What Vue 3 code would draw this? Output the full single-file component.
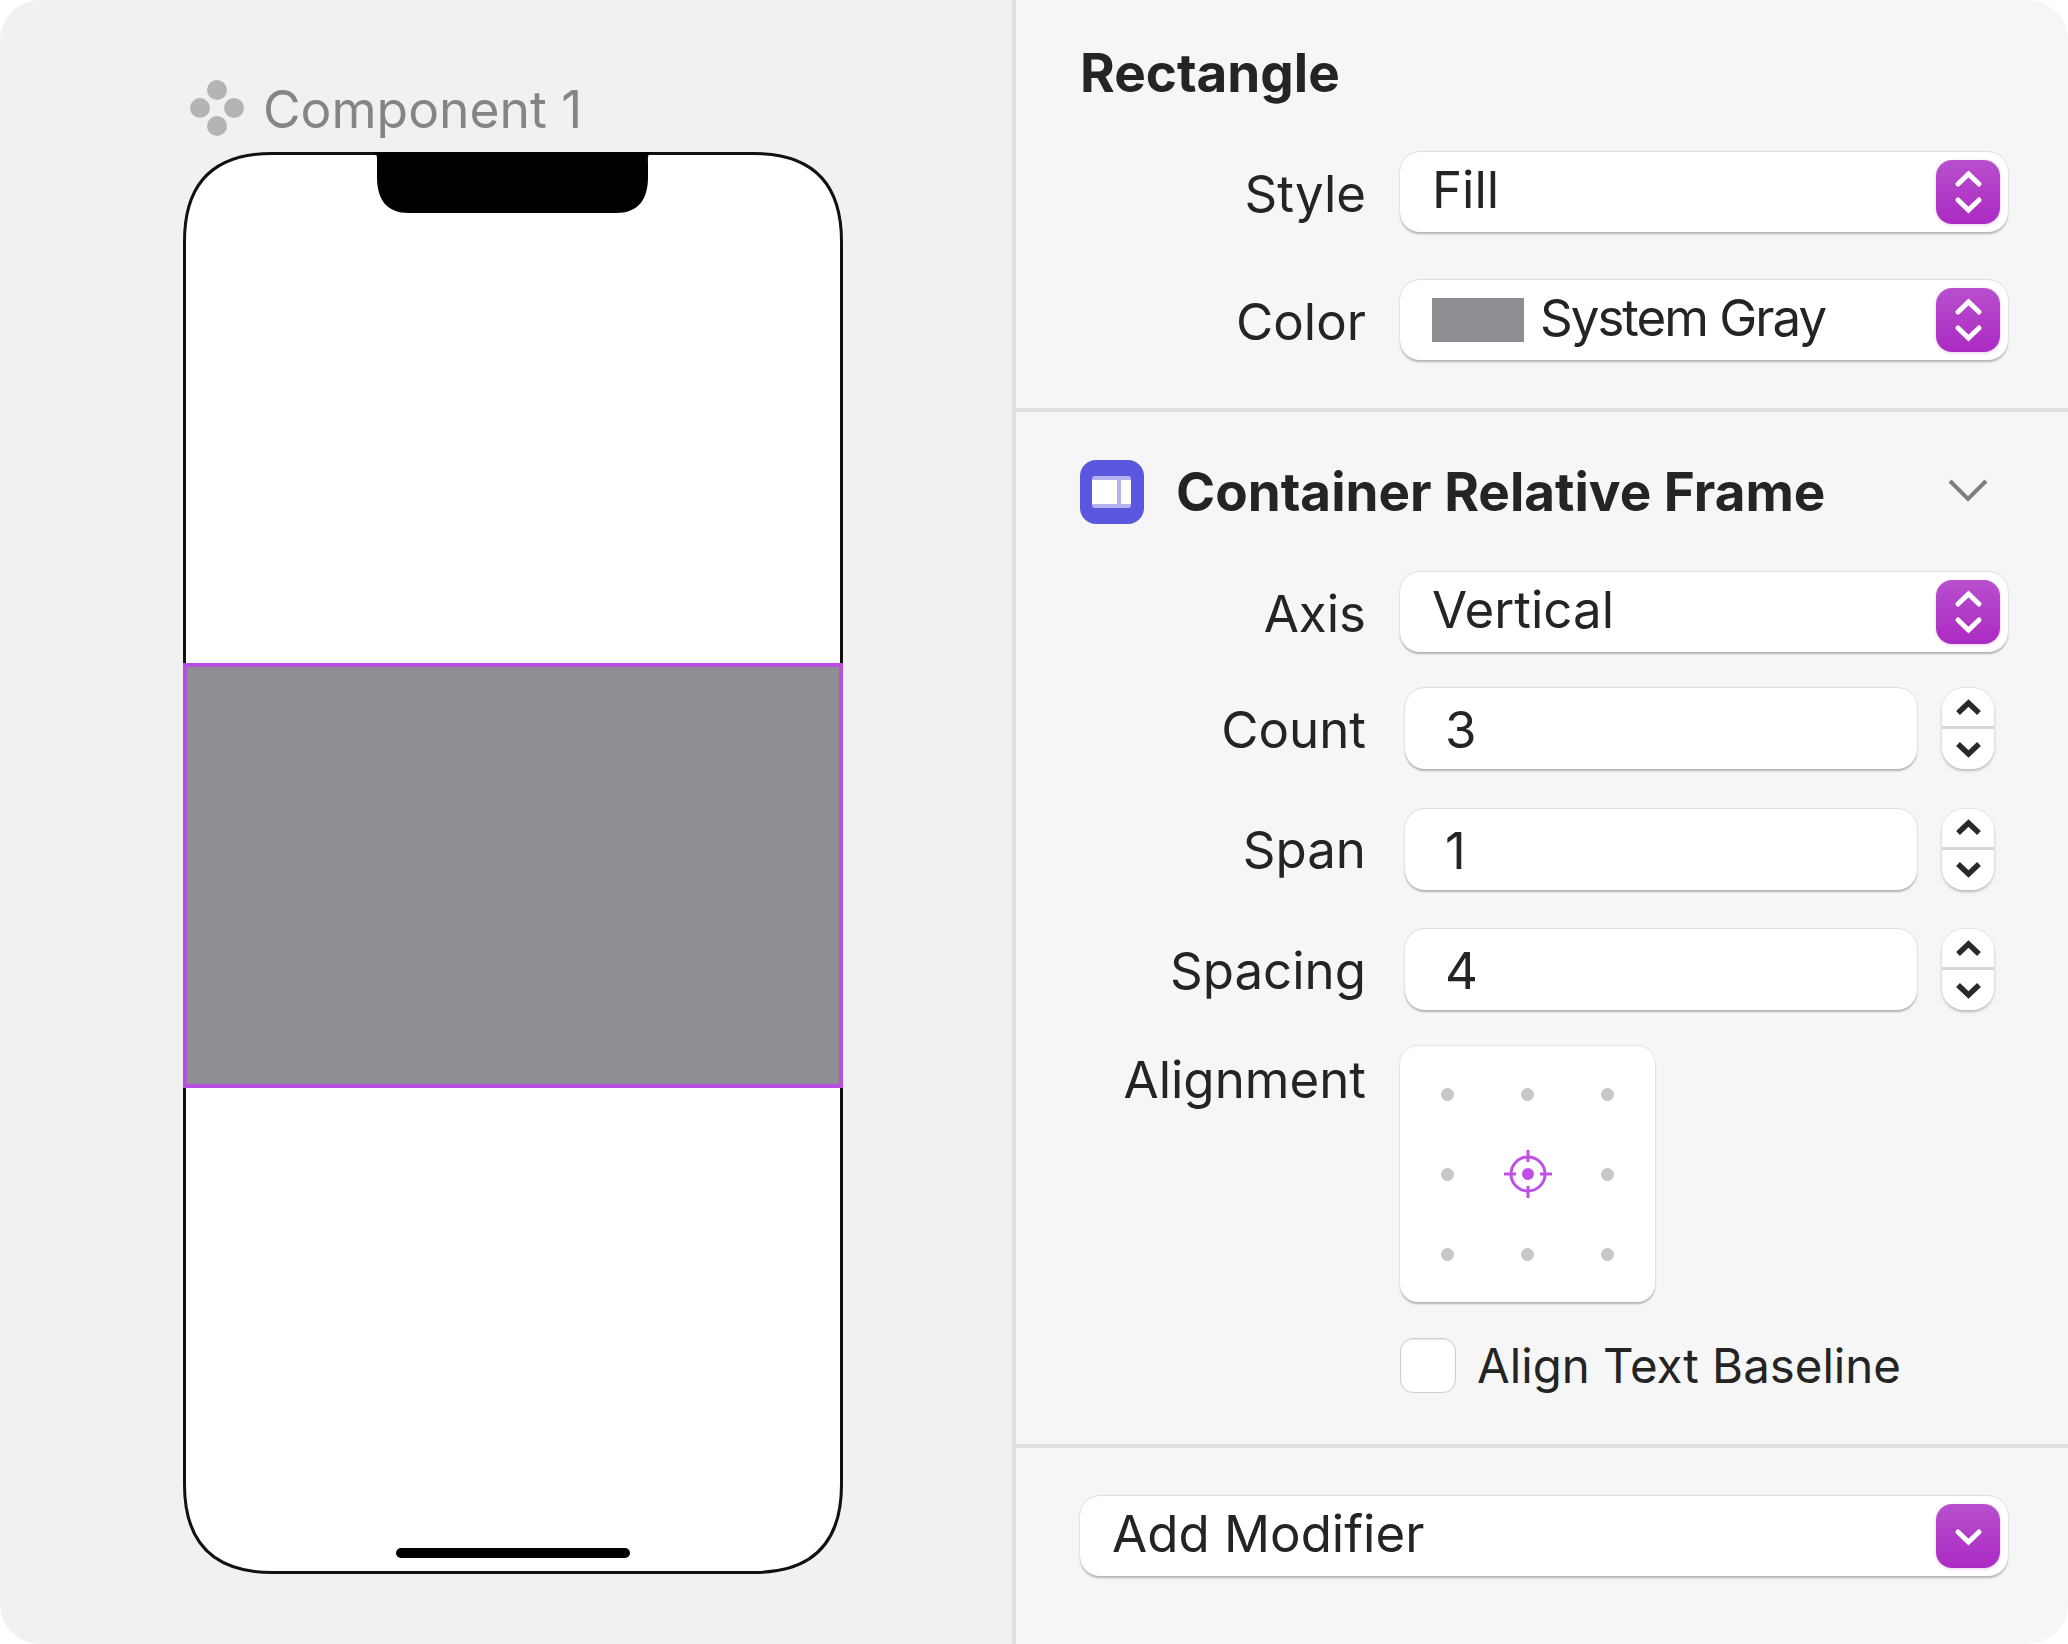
<script setup>
const numbers = [
  { label: 'Count', value: '3' },
  { label: 'Span', value: '1' },
  { label: 'Spacing', value: '4' },
]
const grid = ['a', 'b', 'c', 'd', 'target', 'f', 'g', 'h', 'i']
</script>

<template>
  <div class="app">
    <section class="canvas">
      <header class="comp">
        <svg class="comp-icon" width="54" height="56" viewBox="0 0 54 56">
          <g fill="#b4b4b4">
            <circle cx="10" cy="28" r="10" />
            <circle cx="27" cy="10" r="10" />
            <circle cx="44" cy="28" r="10" />
            <circle cx="27" cy="46" r="10" />
          </g>
        </svg>
        <span class="comp-name">Component 1</span>
      </header>
      <div class="phone">
        <svg class="outline" width="660" height="1422" viewBox="0 0 660 1422">
          <path d="M1.5 89.5C1.5 31 31 1.5 89.5 1.5H570.5C629 1.5 658.5 31 658.5 89.5V1332.5C658.5 1391 629 1420.5 570.5 1420.5H89.5C31 1420.5 1.5 1391 1.5 1332.5Z" fill="#fff" stroke="#111" stroke-width="3" />
        </svg>
        <svg class="notch" width="279" height="61" viewBox="0 0 279 61">
          <path d="M0 0H279C274 2 275 6 275 14V25C275 48 265 61 243 61H36C14 61 4 48 4 25V14C4 6 5 2 0 0Z" fill="#000" />
        </svg>
        <div class="gray"></div>
        <div class="home"></div>
      </div>
    </section>

    <aside class="inspector">
      <section class="sec sec-top">
        <h2 class="title">Rectangle</h2>
        <div class="rows">
          <div class="row">
            <span class="label">Style</span>
            <div class="select">
              <span class="val">Fill</span>
              <span class="btn">
                <svg width="64" height="64" viewBox="0 0 64 64"><path d="M22 24 32.5 14 43 24M22 40 32.5 50 43 40" /></svg>
              </span>
            </div>
          </div>
          <div class="row">
            <span class="label">Color</span>
            <div class="select">
              <span class="swatch"></span>
              <span class="val tight">System Gray</span>
              <span class="btn">
                <svg width="64" height="64" viewBox="0 0 64 64"><path d="M22 24 32.5 14 43 24M22 40 32.5 50 43 40" /></svg>
              </span>
            </div>
          </div>
        </div>
      </section>

      <section class="sec sec-mid">
        <header class="sec-head">
          <svg width="64" height="64" viewBox="0 0 64 64">
            <rect width="64" height="64" rx="16" fill="#5a57de" />
            <rect x="12" y="16" width="39" height="32" rx="3" fill="#b4b3f0" />
            <rect x="12" y="20" width="25" height="24" fill="#fff" />
            <rect x="41" y="20" width="10" height="24" fill="#fff" />
          </svg>
          <h2 class="title head-title">Container Relative Frame</h2>
          <svg class="head-chev" width="40" height="24" viewBox="0 0 40 24">
            <path d="M2 3 20 21 38 3" fill="none" stroke="#7f7f7f" stroke-width="4" />
          </svg>
        </header>
        <div class="rows">
          <div class="row">
            <span class="label">Axis</span>
            <div class="select">
              <span class="val">Vertical</span>
              <span class="btn">
                <svg width="64" height="64" viewBox="0 0 64 64"><path d="M22 24 32.5 14 43 24M22 40 32.5 50 43 40" /></svg>
              </span>
            </div>
          </div>
          <div v-for="n in numbers" :key="n.label" class="row num">
            <span class="label">{{ n.label }}</span>
            <div class="input"><span class="val">{{ n.value }}</span></div>
            <div class="stepper">
              <svg width="52" height="40" viewBox="0 0 52 40"><path d="M16 24 26.5 14 37 24" /></svg>
              <svg width="52" height="40" viewBox="0 0 52 40"><path d="M16 15 26.5 25 37 15" /></svg>
            </div>
          </div>
          <div class="row top">
            <span class="label">Alignment</span>
            <div class="grid-box">
              <div v-for="g in grid" :key="g" class="cell">
                <svg v-if="g === 'target'" width="50" height="50" viewBox="0 0 50 50">
                  <circle cx="25" cy="25" r="17" fill="none" stroke="#bf50e6" stroke-width="3" />
                  <circle cx="25" cy="25" r="6" fill="#bf50e6" />
                  <path d="M25 1V13M25 37V49M1 25H13M37 25H49" stroke="#bf50e6" stroke-width="3" />
                </svg>
                <span v-else class="dot"></span>
              </div>
            </div>
          </div>
          <div class="row check-row">
            <div class="check-line">
              <span class="check"></span>
              <span class="check-text">Align Text Baseline</span>
            </div>
          </div>
        </div>
      </section>

      <section class="sec sec-bottom">
        <div class="select">
          <span class="val">Add Modifier</span>
          <span class="btn">
            <svg width="64" height="64" viewBox="0 0 64 64"><path d="M22 28 32.5 38 43 28" /></svg>
          </span>
        </div>
      </section>
    </aside>
  </div>
</template>

<style>
html, body { margin: 0; background: #fff; }
</style>

<style scoped>
* { box-sizing: border-box; }
.app {
  width: 2068px;
  height: 1644px;
  display: flex;
  border-radius: 40px;
  overflow: hidden;
  font-family: Inter, "Liberation Sans", sans-serif;
  color: #242424;
}
.canvas {
  width: 1016px;
  flex: none;
  background: #f1f1f1;
  border-right: 4px solid #e0e0e0;
  padding: 80px 0 0 183px;
}
.comp {
  display: flex;
  align-items: center;
  gap: 20px;
  height: 56px;
  margin: 0 0 16px 7px;
}
.comp-name {
  font-size: 51.5px;
  line-height: 56px;
  color: #858585;
  position: relative;
  top: 1px;
  left: -1px;
}
.phone {
  position: relative;
  width: 660px;
  height: 1422px;
  padding-top: 511px;
}
.outline { position: absolute; top: 0; left: 0; }
.notch { position: absolute; top: 0; left: 190px; }
.gray {
  position: relative;
  height: 425px;
  background: #8e8e93;
  border: 4px solid #b84fe0;
}
.home {
  position: absolute;
  left: 213px;
  bottom: 16px;
  width: 234px;
  height: 10px;
  border-radius: 5px;
  background: #000;
}
.inspector {
  flex: 1;
  background: #f6f6f6;
  display: flex;
  flex-direction: column;
}
.sec { padding: 0 60px 0 64px; }
.sec-top {
  height: 412px;
  padding-top: 43px;
  border-bottom: 4px solid #e0e0e0;
}
.sec-mid {
  height: 1036px;
  padding-top: 48px;
  border-bottom: 4px solid #e0e0e0;
}
.sec-bottom { padding-top: 48px; }
.title {
  margin: 0 0 49px;
  font-size: 53px;
  line-height: 60px;
  font-weight: 700;
  color: #242424;
}
.sec-head {
  display: flex;
  align-items: center;
  height: 64px;
  margin-bottom: 48px;
}
.head-title { margin: 0 0 0 32px; flex: 1; }
.head-chev { margin-right: 20px; margin-bottom: 4px; }
.rows {
  display: flex;
  flex-direction: column;
  gap: 36px;
}
.sec-top .rows { gap: 48px; }
.row {
  display: flex;
  align-items: center;
}
.row.num + .row.num { margin-top: 3.5px; }
.row.top { align-items: flex-start; }
.check-row { padding-left: 320px; }
.label {
  width: 286px;
  height: 80px;
  margin-right: 34px;
  flex: none;
  text-align: right;
  font-size: 51px;
  line-height: 80px;
  padding-top: 2px;
  color: #242424;
}
.row.num .label { padding-top: 1px; }
.row.top .label { padding-top: 0; margin-top: -6px; }
.select {
  flex: 1;
  height: 80px;
  display: flex;
  align-items: center;
  padding: 0 8px 0 32px;
  background: #fff;
  border-radius: 20px;
  box-shadow: 0 -1px 1px rgba(0, 0, 0, 0.1), 0 2px 2px rgba(0, 0, 0, 0.28);
}
.val {
  display: block;
  font-size: 51px;
  line-height: 76px;
  height: 80px;
  color: #242424;
}
.val.tight { letter-spacing: -2px; }
.swatch {
  width: 92px;
  height: 44px;
  flex: none;
  margin-right: 16px;
  background: #8e8e93;
}
.btn {
  margin-left: auto;
  width: 64px;
  height: 64px;
  flex: none;
  border-radius: 16px;
  background: linear-gradient(#b84fcd, #ab2ac3);
  box-shadow: 0 1px 3px rgba(171, 42, 195, 0.25);
}
.btn svg { display: block; }
.btn path {
  fill: none;
  stroke: #fff;
  stroke-width: 5;
  stroke-linecap: round;
}
.input {
  width: 512px;
  height: 81px;
  margin-left: 5px;
  padding-left: 40px;
  background: #fff;
  border-radius: 20px;
  box-shadow: 0 -1px 1px rgba(0, 0, 0, 0.1), 0 2px 2px rgba(0, 0, 0, 0.28);
}
.input .val { line-height: 83px; }
.stepper {
  width: 52px;
  height: 81px;
  margin-left: 25px;
  display: flex;
  flex-direction: column;
  align-items: center;
  justify-content: center;
  background: linear-gradient(#fff 47%, #d8d8d8 47%, #d8d8d8 51%, #fff 51%);
  border-radius: 22px;
  box-shadow: 0 -1px 1px rgba(0, 0, 0, 0.08), 0 2px 3px rgba(0, 0, 0, 0.25);
}
.stepper svg { display: block; flex: none; }
.stepper path {
  fill: none;
  stroke: #2a2a2a;
  stroke-width: 5.5;
}
.grid-box {
  width: 255px;
  height: 256px;
  display: grid;
  grid-template-columns: repeat(3, 80px);
  grid-template-rows: repeat(3, 80px);
  justify-content: center;
  align-content: center;
  background: #fff;
  border-radius: 18px;
  box-shadow: 0 -1px 1px rgba(0, 0, 0, 0.08), 0 2px 2px rgba(0, 0, 0, 0.28);
}
.cell {
  display: flex;
  align-items: center;
  justify-content: center;
}
.dot {
  width: 13px;
  height: 13px;
  border-radius: 50%;
  background: #c8c8c8;
}
.check-line {
  display: flex;
  align-items: center;
  gap: 21px;
  height: 55px;
}
.check {
  width: 56px;
  height: 55px;
  background: #fff;
  border-radius: 13px;
  border: 1px solid #cfcfcf;
  box-shadow: inset 0 1px 2px rgba(0, 0, 0, 0.1);
}
.check-text {
  font-size: 47.4px;
  line-height: 57px;
  color: #242424;
}
</style>
